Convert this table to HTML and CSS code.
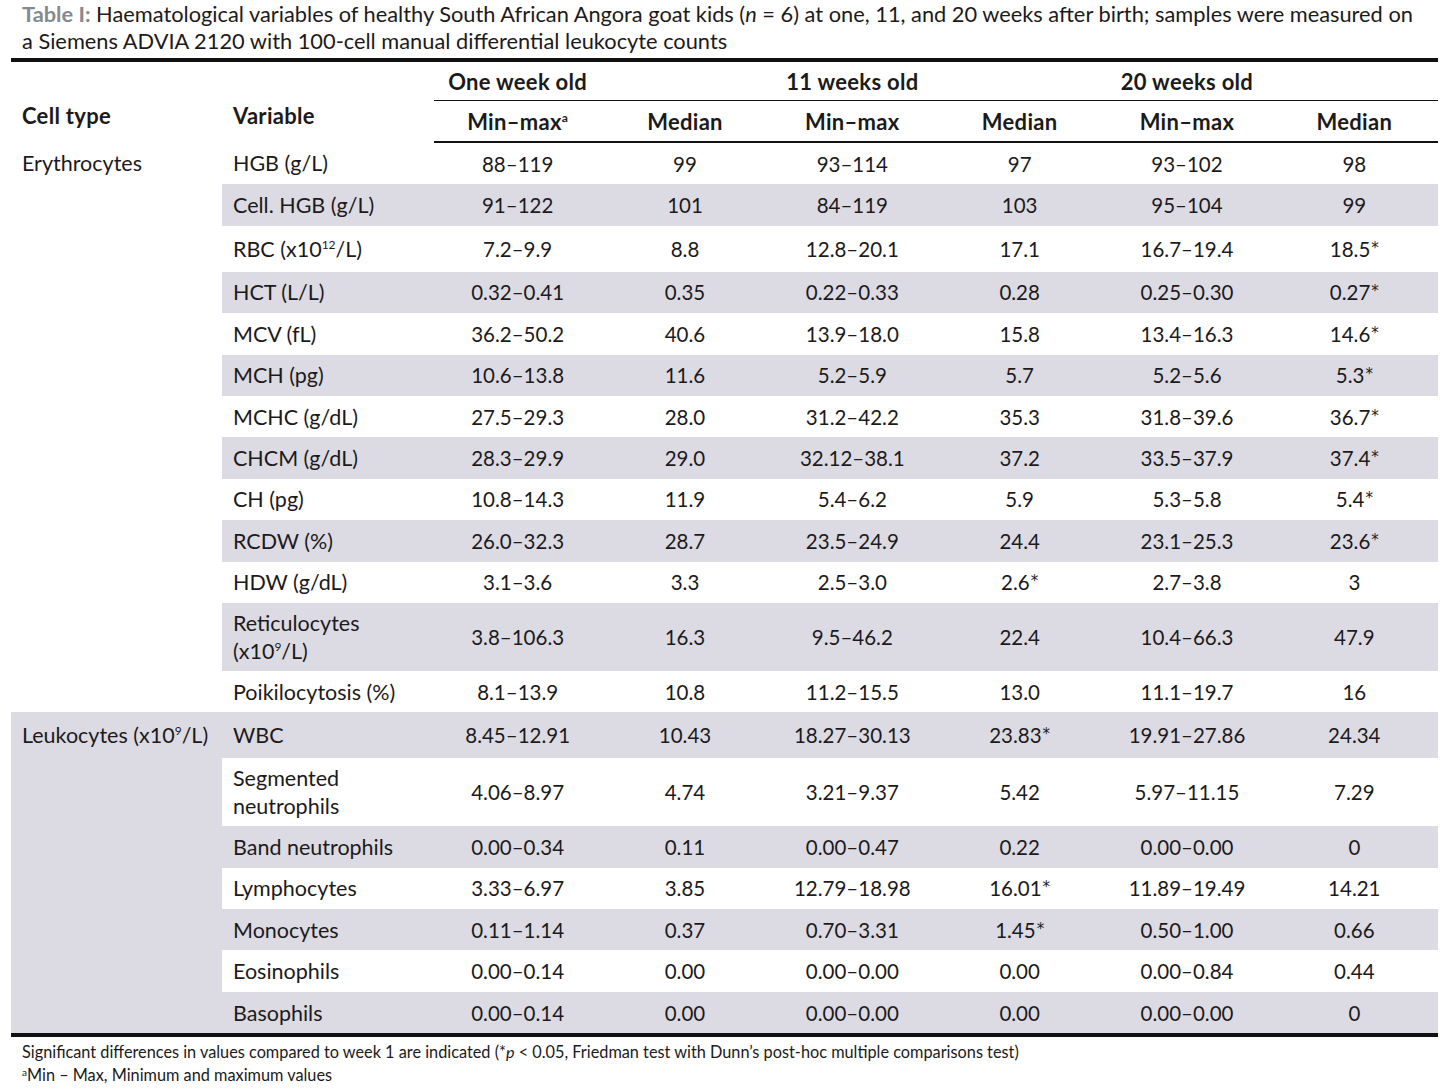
FILE: index.html
```html
<!DOCTYPE html>
<html>
<head>
<meta charset="utf-8">
<link rel="stylesheet" href="styles.css">
</head>
<body>
<div class="page">
  <p class="caption"><span class="cap-label">Table I:</span> Haematological variables of healthy South African Angora goat kids (<i>n</i> = 6) at one, 11, and 20 weeks after birth; samples were measured on a Siemens ADVIA 2120 with 100-cell manual differential leukocyte counts</p>
  <table class="data">
    <colgroup>
      <col class="c-type"><col class="c-var">
      <col class="c-num"><col class="c-num"><col class="c-num"><col class="c-num"><col class="c-num"><col class="c-num">
    </colgroup>
    <thead>
      <tr class="h1">
        <th rowspan="2" class="left hb">Cell type</th>
        <th rowspan="2" class="left hb">Variable</th>
        <th class="grp">One week old</th><th class="grp"></th>
        <th class="grp">11 weeks old</th><th class="grp"></th>
        <th class="grp">20 weeks old</th><th class="grp"></th>
      </tr>
      <tr class="h2">
        <th>Min–max<sup class="fa">a</sup></th><th>Median</th>
        <th>Min–max</th><th>Median</th>
        <th>Min–max</th><th>Median</th>
      </tr>
    </thead>
    <tbody>
      <tr><td rowspan="13" class="left type">Erythrocytes</td><td class="left">HGB (g/L)</td><td>88–119</td><td>99</td><td>93–114</td><td>97</td><td>93–102</td><td>98</td></tr>
      <tr class="g"><td class="left">Cell. HGB (g/L)</td><td>91–122</td><td>101</td><td>84–119</td><td>103</td><td>95–104</td><td>99</td></tr>
      <tr class="sp"><td class="left">RBC (x10<sup>12</sup>/L)</td><td>7.2–9.9</td><td>8.8</td><td>12.8–20.1</td><td>17.1</td><td>16.7–19.4</td><td>18.5<sup class="st">*</sup></td></tr>
      <tr class="g"><td class="left">HCT (L/L)</td><td>0.32–0.41</td><td>0.35</td><td>0.22–0.33</td><td>0.28</td><td>0.25–0.30</td><td>0.27<sup class="st">*</sup></td></tr>
      <tr><td class="left">MCV (fL)</td><td>36.2–50.2</td><td>40.6</td><td>13.9–18.0</td><td>15.8</td><td>13.4–16.3</td><td>14.6<sup class="st">*</sup></td></tr>
      <tr class="g"><td class="left">MCH (pg)</td><td>10.6–13.8</td><td>11.6</td><td>5.2–5.9</td><td>5.7</td><td>5.2–5.6</td><td>5.3<sup class="st">*</sup></td></tr>
      <tr><td class="left">MCHC (g/dL)</td><td>27.5–29.3</td><td>28.0</td><td>31.2–42.2</td><td>35.3</td><td>31.8–39.6</td><td>36.7<sup class="st">*</sup></td></tr>
      <tr class="g"><td class="left">CHCM (g/dL)</td><td>28.3–29.9</td><td>29.0</td><td>32.12–38.1</td><td>37.2</td><td>33.5–37.9</td><td>37.4<sup class="st">*</sup></td></tr>
      <tr><td class="left">CH (pg)</td><td>10.8–14.3</td><td>11.9</td><td>5.4–6.2</td><td>5.9</td><td>5.3–5.8</td><td>5.4<sup class="st">*</sup></td></tr>
      <tr class="g"><td class="left">RCDW (%)</td><td>26.0–32.3</td><td>28.7</td><td>23.5–24.9</td><td>24.4</td><td>23.1–25.3</td><td>23.6<sup class="st">*</sup></td></tr>
      <tr><td class="left">HDW (g/dL)</td><td>3.1–3.6</td><td>3.3</td><td>2.5–3.0</td><td>2.6<sup class="st">*</sup></td><td>2.7–3.8</td><td>3</td></tr>
      <tr class="g two"><td class="left">Reticulocytes<br>(x10<sup>9</sup>/L)</td><td>3.8–106.3</td><td>16.3</td><td>9.5–46.2</td><td>22.4</td><td>10.4–66.3</td><td>47.9</td></tr>
      <tr><td class="left">Poikilocytosis (%)</td><td>8.1–13.9</td><td>10.8</td><td>11.2–15.5</td><td>13.0</td><td>11.1–19.7</td><td>16</td></tr>
      <tr class="g sp"><td rowspan="7" class="left type">Leukocytes (x10<sup>9</sup>/L)</td><td class="left">WBC</td><td>8.45–12.91</td><td>10.43</td><td>18.27–30.13</td><td>23.83<sup class="st">*</sup></td><td>19.91–27.86</td><td>24.34</td></tr>
      <tr class="two"><td class="left">Segmented<br>neutrophils</td><td>4.06–8.97</td><td>4.74</td><td>3.21–9.37</td><td>5.42</td><td>5.97–11.15</td><td>7.29</td></tr>
      <tr class="g"><td class="left">Band neutrophils</td><td>0.00–0.34</td><td>0.11</td><td>0.00–0.47</td><td>0.22</td><td>0.00–0.00</td><td>0</td></tr>
      <tr><td class="left">Lymphocytes</td><td>3.33–6.97</td><td>3.85</td><td>12.79–18.98</td><td>16.01<sup class="st">*</sup></td><td>11.89–19.49</td><td>14.21</td></tr>
      <tr class="g"><td class="left">Monocytes</td><td>0.11–1.14</td><td>0.37</td><td>0.70–3.31</td><td>1.45<sup class="st">*</sup></td><td>0.50–1.00</td><td>0.66</td></tr>
      <tr><td class="left">Eosinophils</td><td>0.00–0.14</td><td>0.00</td><td>0.00–0.00</td><td>0.00</td><td>0.00–0.84</td><td>0.44</td></tr>
      <tr class="g"><td class="left">Basophils</td><td>0.00–0.14</td><td>0.00</td><td>0.00–0.00</td><td>0.00</td><td>0.00–0.00</td><td>0</td></tr>
    </tbody>
  </table>
  <div class="notes">
    <p>Significant differences in values compared to week 1 are indicated (*<i>p</i> &lt; 0.05, Friedman test with Dunn’s post-hoc multiple comparisons test)</p>
    <p><sup class="fn">a</sup>Min – Max, Minimum and maximum values</p>
  </div>
</div>
</body>
</html>
```

FILE: styles.css
```css
html, body {
  margin: 0;
  padding: 0;
  background: #ffffff;
}
body {
  font-family: Lato, "Open Sans", "Liberation Sans", sans-serif;
  color: #1c1a1b;
}
.page {
  width: 1445px;
}
.caption {
  margin: 0;
  padding: 0 0 0 22px;
  font-size: 21.8px;
  line-height: 27px;
  width: 1397px;
}
.cap-label {
  color: #858a91;
  font-weight: 700;
}
.data {
  margin: 4px 0 0 11px;
  width: 1427px;
  border-collapse: collapse;
  table-layout: fixed;
  font-size: 20.5px;
  border-top: 4px solid #111;
  border-bottom: 4px solid #111;
}
.c-type { width: 211px; }
.c-var { width: 212px; }
.c-num { width: 167.33px; }
th, td {
  padding: 0;
  text-align: center;
  font-weight: 400;
}
th {
  font-weight: 700;
  font-size: 22px;
  letter-spacing: 0.3px;
}
.left {
  text-align: left;
  padding-left: 11px;
}
td.left {
  font-size: 21.5px;
}
.h1 th {
  height: 38px;
  vertical-align: middle;
}
.h1 th.grp {
  border-bottom: 1.5px solid #111;
}
.h1 th.hb {
  vertical-align: bottom;
  padding-bottom: 13px;
}
.h2 th {
  height: 39px;
  border-bottom: 2px solid #111;
  vertical-align: middle;
  padding-top: 1px;
}
td {
  height: 41.4px;
  vertical-align: middle;
  line-height: 28px;
}
tr.sp td { height: 46px; }
tr.two td { height: 68px; }
td.type { vertical-align: top; padding-top: 7px; }
tr.sp td.type { padding-top: 9px; }
tr.g td { background: #dcdbe3; }
sup {
  font-size: 12px;
  line-height: 0;
  vertical-align: 8px;
}
sup.st {
  font-family: "DejaVu Sans", sans-serif;
  font-size: 15px;
  vertical-align: 4px;
  margin-left: 1px;
}
sup.fa {
  font-size: 12px;
}
.notes {
  padding: 3px 0 0 22px;
  font-size: 16.3px;
}
.notes p {
  margin: 0;
  line-height: 23px;
}
sup.fn { font-size: 10px; vertical-align: 5px; }
```
